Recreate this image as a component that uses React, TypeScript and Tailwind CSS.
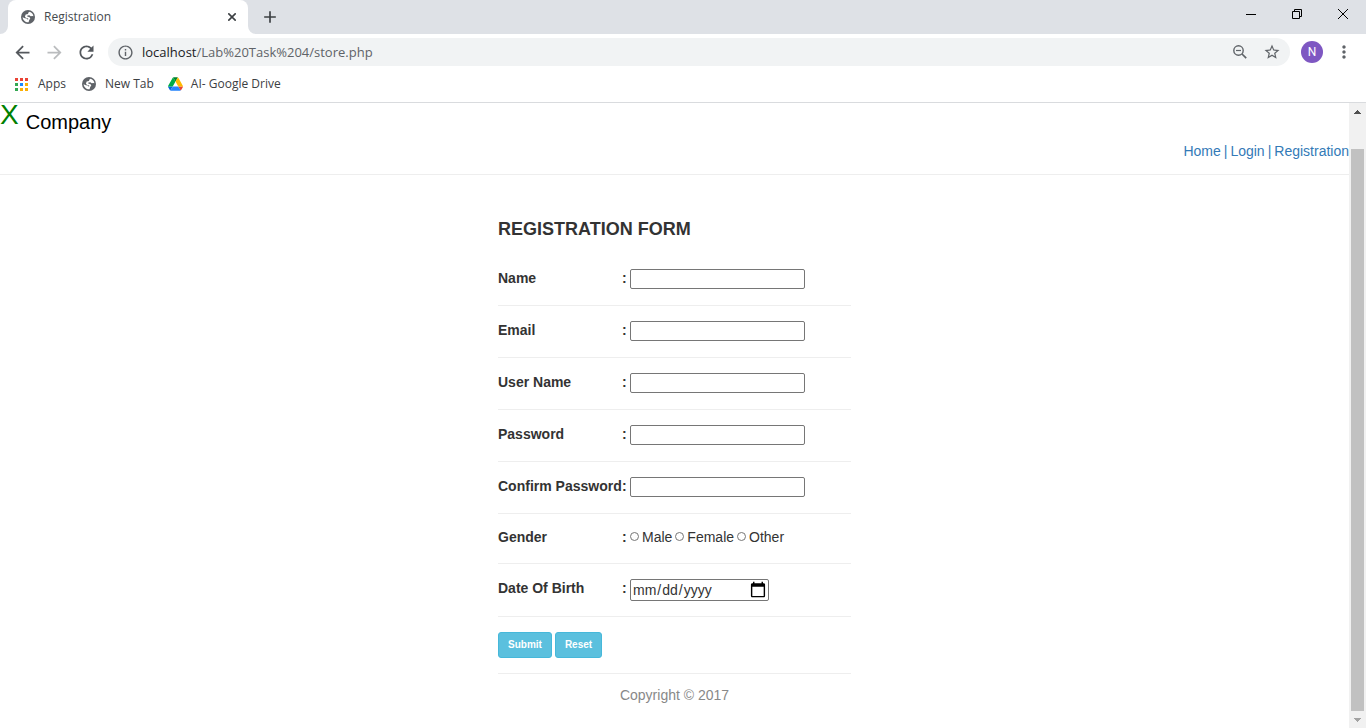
import React from "react";
import {
  MdAdd,
  MdArrowBack,
  MdArrowForward,
  MdInfoOutline,
  MdMoreVert,
  MdRefresh,
  MdStarBorder,
} from "react-icons/md";

const APP_DOTS = [
  "#ea4335", "#ea4335", "#ea4335",
  "#34a853", "#1a88ff", "#fbaf05",
  "#34a853", "#fbaf05", "#fbaf05",
];

function AppsIcon() {
  return (
    <svg width="13" height="13" viewBox="0 0 13 13" aria-hidden="true">
      {APP_DOTS.map((color, i) => (
        <rect key={i} x={(i % 3) * 5} y={Math.floor(i / 3) * 5} width="3" height="3" fill={color} />
      ))}
    </svg>
  );
}

function GlobeIcon() {
  return (
    <svg width="14" height="14" viewBox="0 0 14 14" aria-hidden="true">
      <circle cx="7" cy="7" r="7" fill="#5f6368" />
      <path
        d="M8.600 1.700C10.800 2.300 12.300 4.300 12.400 6.300L11.200 5.900L9.800 6.200L8.300 5.300L6.400 5.500L6.200 6.600L8.600 7.200L9.300 8.600L8.200 10L7.600 12.300C4.600 12.600 1.900 10.300 1.600 7.300L3.800 8.300L5.800 8.500L6.300 9.600L7.300 9.200L7.200 8.400L4.800 7.700L3.900 6.400L4.700 4.500L7 3.900L7.400 2.500Z"
        fill="#fff"
      />
    </svg>
  );
}

function DriveIcon() {
  return (
    <svg width="15" height="14" viewBox="0 0 87.3 78" aria-hidden="true">
      <path d="m6.6 66.85 3.85 6.65c.8 1.4 1.95 2.5 3.3 3.3l13.75-23.8h-27.5c0 1.55.4 3.1 1.2 4.5z" fill="#0066da" />
      <path d="m43.65 25-13.75-23.8c-1.35.8-2.5 1.9-3.3 3.3l-25.4 44a9.06 9.06 0 0 0 -1.2 4.5h27.5z" fill="#00ac47" />
      <path d="m73.55 76.8c1.35-.8 2.5-1.9 3.3-3.3l1.6-2.75 7.65-13.25c.8-1.4 1.2-2.95 1.2-4.5h-27.502l5.852 11.5z" fill="#ea4335" />
      <path d="m43.65 25 13.75-23.8c-1.35-.8-2.9-1.2-4.5-1.2h-18.5c-1.6 0-3.15.45-4.5 1.2z" fill="#00832d" />
      <path d="m59.8 53h-32.3l-13.75 23.8c1.35.8 2.9 1.2 4.5 1.2h50.8c1.6 0 3.15-.45 4.5-1.2z" fill="#2684fc" />
      <path d="m73.4 26.5-12.7-22c-.8-1.4-1.95-2.5-3.3-3.3l-13.75 23.8 16.15 28h27.45c0-1.55-.4-3.1-1.2-4.5z" fill="#ffba00" />
    </svg>
  );
}

function ZoomOutIcon() {
  return (
    <svg width="14" height="14" viewBox="0 0 14 14" fill="none" stroke="#5f6368" aria-hidden="true">
      <circle cx="5.500" cy="5.500" r="4.700" strokeWidth="1.400" />
      <path d="M3 5.500H8" strokeWidth="1.200" />
      <path d="M9 9L13.200 13.200" strokeWidth="1.700" />
    </svg>
  );
}

function TabStrip() {
  return (
    <div className="flex h-[34px] shrink-0 bg-[#dee1e6] pl-2">
      <div className="relative flex w-60 items-center rounded-t-lg bg-white pl-[13px] pr-2">
        <svg className="absolute bottom-0 -left-2" width="8" height="8" aria-hidden="true">
          <path d="M8 0V8H0A8 8 0 0 0 8 0Z" fill="#fff" />
        </svg>
        <svg className="absolute -right-2 bottom-0" width="8" height="8" aria-hidden="true">
          <path d="M0 0V8H8A8 8 0 0 1 0 0Z" fill="#fff" />
        </svg>
        <GlobeIcon />
        <span className="flex-1 pl-[9px] text-[12px] text-[#45494d]">Registration</span>
        <button type="button" aria-label="Close tab" className="flex size-4 items-center justify-center">
          <svg width="8" height="8" viewBox="0 0 8 8" stroke="#3c4043" strokeWidth="1.600" aria-hidden="true">
            <path d="M.3 .3L7.700 7.700M7.700 .3L.3 7.700" />
          </svg>
        </button>
      </div>
      <button type="button" aria-label="New tab" className="flex w-11 items-center justify-center">
        <MdAdd size={20} color="#3c4043" />
      </button>
      <div className="ml-auto flex h-7">
        <button type="button" aria-label="Minimize" className="flex w-[46px] items-center justify-center">
          <svg width="10" height="10" aria-hidden="true">
            <path d="M0 5.5H10" stroke="#000" />
          </svg>
        </button>
        <button type="button" aria-label="Restore" className="flex w-[46px] items-center justify-center">
          <svg width="10" height="10" fill="none" stroke="#000" aria-hidden="true">
            <path d="M.5 2.5H7.5V9.5H.5ZM2.5 2.5V.5H9.5V7.5H7.5" />
          </svg>
        </button>
        <button type="button" aria-label="Close" className="flex w-[46px] items-center justify-center">
          <svg width="10" height="10" stroke="#000" aria-hidden="true">
            <path d="M0 0L10 10M10 0L0 10" />
          </svg>
        </button>
      </div>
    </div>
  );
}

function Toolbar() {
  return (
    <div className="flex h-9 shrink-0 items-center pl-1.5 pr-1.5">
      <button type="button" aria-label="Back" className="flex w-8 justify-center">
        <MdArrowBack size={21} color="#54585d" />
      </button>
      <button type="button" aria-label="Forward" className="flex w-8 justify-center">
        <MdArrowForward size={21} color="#babcbe" />
      </button>
      <button type="button" aria-label="Reload" className="flex w-8 justify-center">
        <MdRefresh size={21} color="#54585d" />
      </button>
      <div className="ml-1.5 flex h-7 flex-1 items-center rounded-full bg-[#f1f3f4] pl-[9px] pr-0.5">
        <MdInfoOutline size={17} color="#5f6368" />
        <span className="flex-1 pl-2 text-[13px] leading-5 text-[#5f6368]">
          <span className="text-[#202124]">localhost</span>/Lab%20Task%204/store.php
        </span>
        <button type="button" aria-label="Zoom" className="flex w-8 justify-center">
          <ZoomOutIcon />
        </button>
        <button type="button" aria-label="Bookmark this page" className="flex w-8 justify-center">
          <MdStarBorder size={18} color="#5f6368" />
        </button>
      </div>
      <button
        type="button"
        aria-label="Profile"
        className="ml-[11px] flex size-[22px] items-center justify-center rounded-full bg-[#7e57c2] font-[Roboto,sans-serif] text-[12px] text-white"
      >
        N
      </button>
      <button type="button" aria-label="Menu" className="ml-[5px] flex w-8 justify-center">
        <MdMoreVert size={20} color="#5f6368" />
      </button>
    </div>
  );
}

function Bookmarks() {
  return (
    <nav className="flex h-[33px] shrink-0 items-center border-b border-[#d9dbde] pb-1 pl-[15px] text-[12px] text-[#3c4043]">
      <a href="#apps" className="flex items-center gap-2.5">
        <AppsIcon />
        Apps
      </a>
      <a href="#new-tab" className="ml-4 flex items-center gap-[9px]">
        <GlobeIcon />
        New Tab
      </a>
      <a href="#drive" className="ml-3.5 flex items-center gap-2">
        <DriveIcon />
        AI- Google Drive
      </a>
    </nav>
  );
}

function Scrollbar() {
  return (
    <div className="flex w-[17px] shrink-0 flex-col bg-[#f1f1f1]" aria-hidden="true">
      <div className="flex h-[17px] items-center justify-center">
        <svg width="7" height="4">
          <path d="M3 0H4V1H5V2H6V3H7V4H0V3H1V2H2V1H3Z" fill="#505050" />
        </svg>
      </div>
      <div className="flex flex-1 flex-col px-0.5 pt-[29px]">
        <div className="flex-1 bg-[#c1c1c1]" />
      </div>
      <div className="flex h-[17px] items-center justify-center">
        <svg width="7" height="4">
          <path d="M0 0H7V1H6V2H5V3H4V4H3V3H2V2H1V1H0Z" fill="#a3a3a3" />
        </svg>
      </div>
    </div>
  );
}

const FIELDS = [
  { id: "name", label: "Name", type: "text" },
  { id: "email", label: "Email", type: "text" },
  { id: "username", label: "User Name", type: "text" },
  { id: "password", label: "Password", type: "password" },
  { id: "confirm", label: "Confirm Password", type: "password" },
];

const ROW = "flex items-center border-b border-[#eee]";
const LABEL = "flex w-[132px] shrink-0 whitespace-nowrap pb-1 font-bold leading-5";
const CONTROL = "rounded-[2px] border border-[#767676] bg-white text-[14px] leading-5";
const BUTTON = "h-[26px] rounded-[3px] border border-[#46b8da] bg-[#5bc0de] px-[9px]";

function RegistrationForm() {
  return (
    <form className="mx-auto w-[353px] pt-11" onSubmit={(e) => e.preventDefault()}>
      <h2 className="mb-[15px] text-[18px] font-bold leading-5">REGISTRATION FORM</h2>
      {FIELDS.map((f) => (
        <div key={f.id} className={ROW + " h-[52px]"}>
          <label htmlFor={f.id} className={LABEL}>
            <span className="w-[124px]">{f.label}</span>:
          </label>
          <input id={f.id} type={f.type} className={CONTROL + " mb-px h-5 w-[175px] px-0.5"} />
        </div>
      ))}
      <div className={ROW + " h-[50px]"} role="radiogroup" aria-labelledby="gender">
        <span id="gender" className={LABEL}>
          <span className="w-[124px]">Gender</span>:
        </span>
        <div className="flex gap-[3px] pb-1 leading-5">
          {["Male", "Female", "Other"].map((g) => (
            <label key={g} className="flex items-center gap-[3px]">
              <input
                type="radio"
                name="gender"
                value={g}
                className="size-[9px] appearance-none rounded-full border border-[#767676] bg-white checked:bg-[#767676]"
              />
              {g}
            </label>
          ))}
        </div>
      </div>
      <div className={ROW + " h-[53px]"}>
        <label htmlFor="dob" className={LABEL}>
          <span className="w-[124px]">Date Of Birth</span>:
        </label>
        <input
          id="dob"
          type="date"
          className={
            CONTROL +
            " h-[22px] w-[139px] px-px [&::-webkit-calendar-picker-indicator]:ml-0 [&::-webkit-calendar-picker-indicator]:size-[18px] [&::-webkit-calendar-picker-indicator]:p-0"
          }
        />
      </div>
      <div className={ROW + " h-[57px] gap-[3px] text-[10px] font-bold leading-4 text-white"}>
        <button type="submit" className={BUTTON}>
          Submit
        </button>
        <button type="reset" className={BUTTON}>
          Reset
        </button>
      </div>
      <p className="pt-[11px] text-center leading-5 text-[#888]">Copyright © 2017</p>
    </form>
  );
}

export default function App() {
  return (
    <div className="flex min-h-screen flex-col bg-white font-['Open_Sans',sans-serif]">
      <TabStrip />
      <Toolbar />
      <Bookmarks />
      <div className="flex flex-1">
        <main className="flex-1 font-['Liberation_Sans',Arial,sans-serif] text-[14px] text-[#333]">
          <header className="border-b border-[#eee] pb-[13px]">
            <div className="flex items-start gap-[7px]">
              <span className="text-[28px] leading-6 text-[#008000]">X</span>
              <span className="pt-[7px] text-[20px] leading-6 text-black">Company</span>
            </div>
            <nav className="flex justify-end gap-[3px] pt-[7px] leading-5 text-[#337ab7]">
              <a href="#home">Home</a>
              <span>|</span>
              <a href="#login">Login</a>
              <span>|</span>
              <a href="#registration">Registration</a>
            </nav>
          </header>
          <RegistrationForm />
        </main>
        <Scrollbar />
      </div>
    </div>
  );
}
